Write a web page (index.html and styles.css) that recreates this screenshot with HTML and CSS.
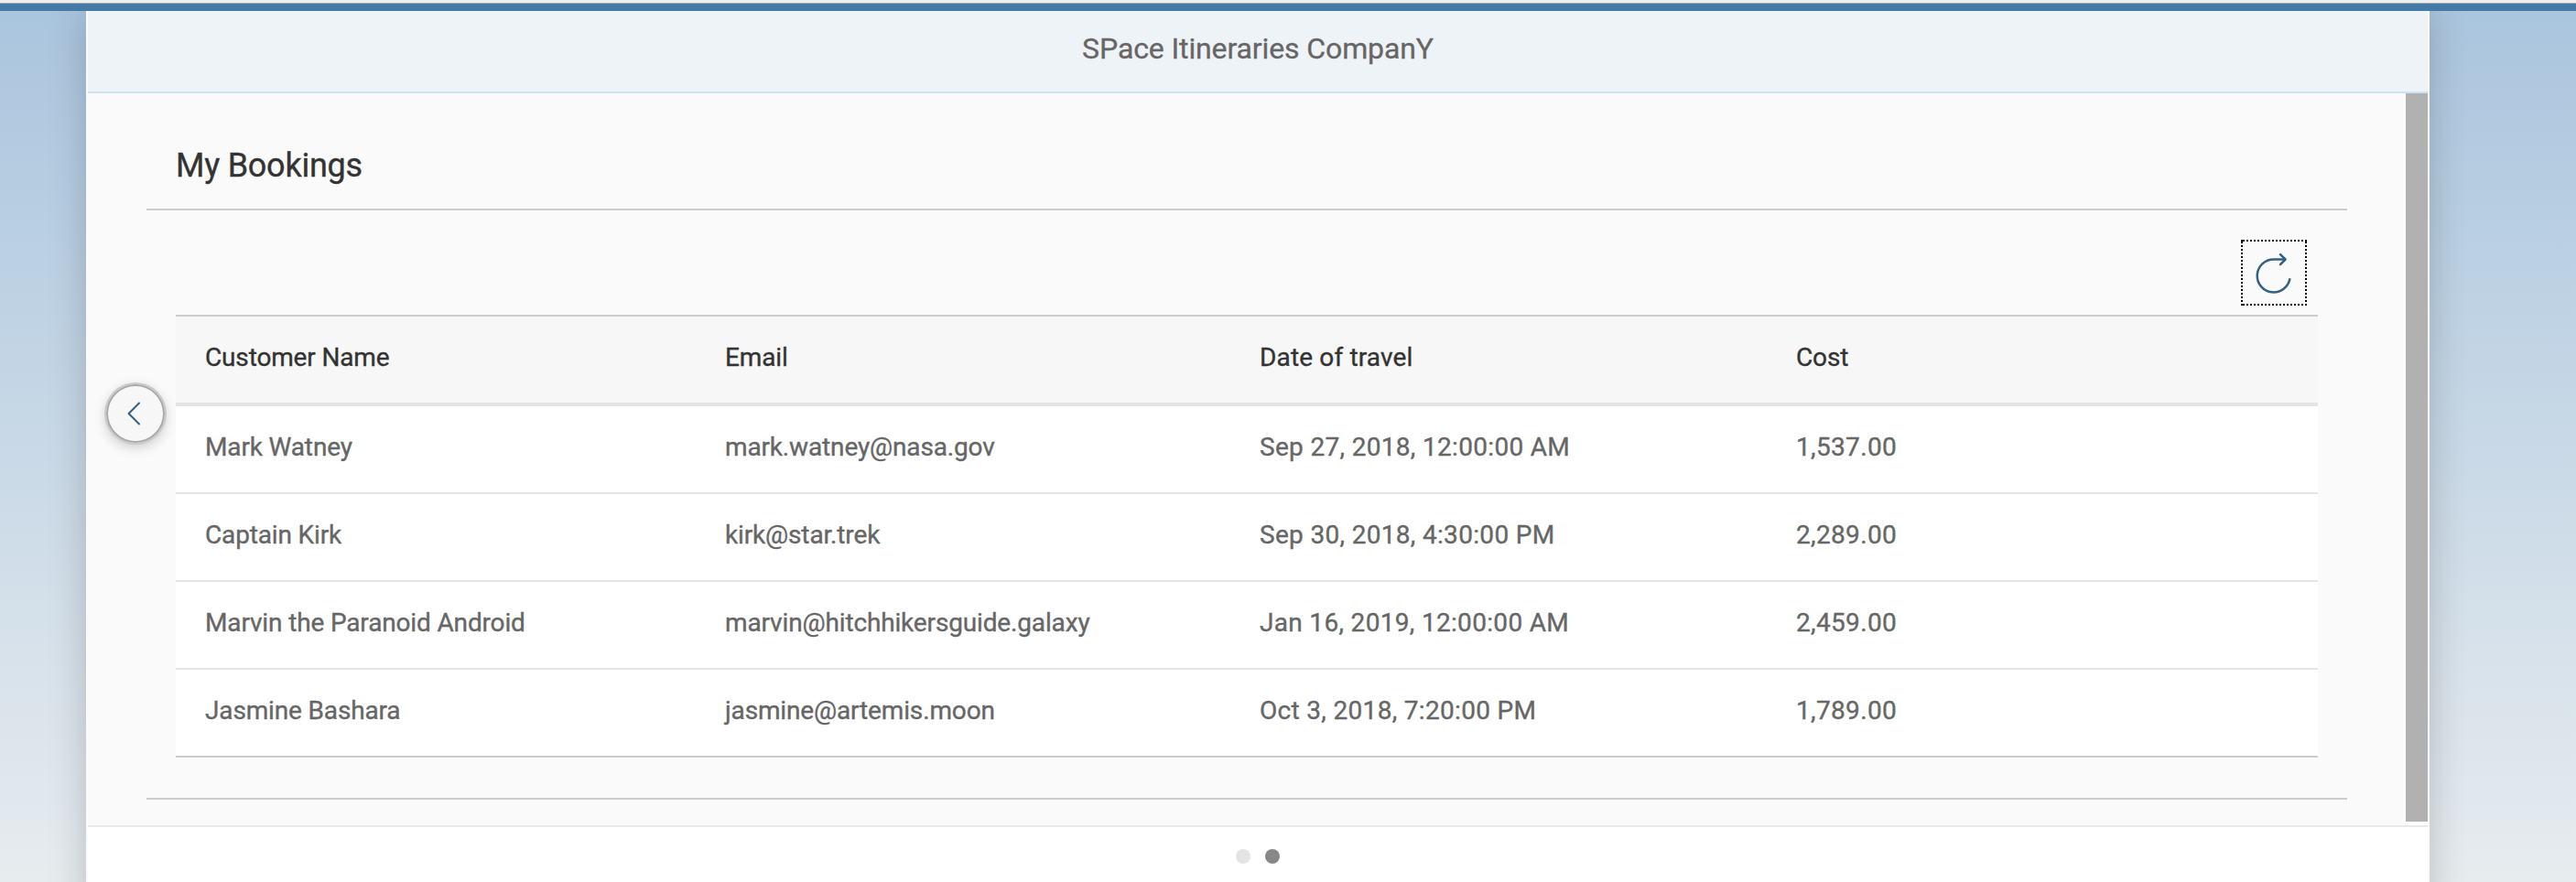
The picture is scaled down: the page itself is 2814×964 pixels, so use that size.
FILE: index.html
```
<!DOCTYPE html>
<html lang="en">
<head>
<meta charset="utf-8">
<title>SPace Itineraries CompanY</title>
<link rel="stylesheet" href="styles.css">
</head>
<body>
<div class="browser-edge"></div>
<div class="brand-bar"></div>
<div class="stage">
  <main class="panel">
    <header class="panel-header"><h1>SPace Itineraries CompanY</h1></header>
    <div class="panel-body">
      <section class="content">
        <h2 class="section-title">My Bookings</h2>
        <div class="section-body">
          <div class="toolbar">
            <button class="refresh" aria-label="Refresh">
              <svg width="72" height="72" viewBox="0 0 72 72" fill="none">
                <g stroke="#000" stroke-width="2" stroke-dasharray="2 2" shape-rendering="crispEdges">
                  <path d="M2 1H72M2 71H72M1 2V72M71 2V72"/>
                </g>
                <path fill="#000" d="M0 0h2v2H0zM70 0h2v2h-2zM0 70h2v2H0z"/>
                <g stroke="#346187" stroke-width="2.5" stroke-linecap="round" stroke-linejoin="round">
                  <path d="M48 21.4H35.7A18 18 0 1 0 53.5 42.3" stroke-linecap="butt"/>
                  <path d="M43 16.1L48.6 21.5L43 27.2"/>
                </g>
              </svg>
            </button>
          </div>
          <table class="bookings">
            <thead><tr><th>Customer Name</th><th>Email</th><th>Date of travel</th><th>Cost</th></tr></thead>
            <tbody>
              <tr><td>Mark Watney</td><td>mark.watney@nasa.gov</td><td>Sep 27, 2018, 12:00:00 AM</td><td>1,537.00</td></tr>
              <tr><td>Captain Kirk</td><td>kirk@star.trek</td><td>Sep 30, 2018, 4:30:00 PM</td><td>2,289.00</td></tr>
              <tr><td>Marvin the Paranoid Android</td><td>marvin@hitchhikersguide.galaxy</td><td>Jan 16, 2019, 12:00:00 AM</td><td>2,459.00</td></tr>
              <tr><td>Jasmine Bashara</td><td>jasmine@artemis.moon</td><td>Oct 3, 2018, 7:20:00 PM</td><td>1,789.00</td></tr>
            </tbody>
          </table>
        </div>
      </section>
      <div class="scrollbar"></div>
      <button class="previous" aria-label="Previous page">
        <svg width="64" height="64" viewBox="0 0 64 64" fill="none"><path d="M36 20.5L24.6 32L36 43.5" stroke="#346187" stroke-width="2" stroke-linecap="round" stroke-linejoin="round"/></svg>
      </button>
    </div>
    <footer class="pager"><span class="dot"></span><span class="dot active"></span></footer>
  </main>
</div>
</body>
</html>
```
FILE: styles.css
```
* { box-sizing: border-box; }
body {
  margin: 0;
  height: 964px;
  overflow: hidden;
  display: flex;
  flex-direction: column;
  font-family: Roboto, "Liberation Sans", sans-serif;
  font-size: 28px;
  color: #666;
  -webkit-text-stroke: .35px;
}
button { border: 0; padding: 0; margin: 0; }
svg { display: block; }
.browser-edge { height: 4px; background: #efefef; border-bottom: 1px solid #a9a9a9; }
.brand-bar { height: 8px; background: #447aa8; }
.stage {
  height: 952px;
  display: flex;
  overflow: hidden;
  padding: 0 160px 0 94px;
  background: linear-gradient(#aac5de, #e7ecef);
}
.panel {
  flex: 1;
  height: 1100px;
  display: flex;
  flex-direction: column;
  background: #fafafa;
  border: solid #fafafa;
  border-width: 0 2px;
  box-shadow: 0 0 40px rgba(0, 0, 0, .2);
}
.panel-header {
  height: 90px;
  display: flex;
  justify-content: center;
  padding-top: 21px;
  background: #eef3f8;
  border-bottom: 2px solid #d0e1ef;
}
h1, h2 { margin: 0; font-weight: 400; line-height: 40px; }
h1 { font-size: 32px; letter-spacing: -.12px; color: #666; text-shadow: 0 0 2px #fff; }
.panel-body {
  position: relative;
  height: 802px;
  display: flex;
  border-bottom: 2px solid #e9e9e9;
}
.content { flex: 1; padding: 0 64px; }
.section-title {
  height: 128px;
  padding: 59px 32px 0;
  font-size: 36px;
  letter-spacing: -.25px;
  color: #333;
  border-bottom: 2px solid #ccc;
}
.section-body { height: 644px; padding: 0 32px; border-bottom: 2px solid #ccc; }
.toolbar { height: 114px; display: flex; justify-content: flex-end; padding: 32px 12px 0 0; }
.refresh { width: 72px; height: 72px; background: none; }
.bookings {
  width: 100%;
  table-layout: fixed;
  border-collapse: separate;
  border-spacing: 0;
  border-bottom: 2px solid #ccc;
}
.bookings th, .bookings td {
  height: 96px;
  padding: 0 0 5px 32px;
  font-weight: 400;
  letter-spacing: -.15px;
  text-align: left;
  white-space: nowrap;
  background: #fff;
  border-bottom: 2px solid #e4e4e4;
}
.bookings th {
  height: 100px;
  color: #333;
  background: #f7f7f7;
  border-top: 2px solid #ccc;
  border-bottom: 4px solid #e4e4e4;
}
.bookings th:nth-child(1) { width: 568px; }
.bookings th:nth-child(2) { width: 584px; }
.bookings th:nth-child(3) { width: 586px; letter-spacing: .15px; }
.bookings td:nth-child(3) { letter-spacing: .32px; }
.bookings td:nth-child(4) { letter-spacing: .35px; }
.bookings tbody tr:last-child td { height: 94px; border-bottom: 0; }
.scrollbar { width: 24px; height: 796px; background: #b1b1b1; box-shadow: 0 4px #fff; }
.previous {
  position: absolute;
  left: 20px;
  top: 318px;
  width: 64px;
  height: 64px;
  border-radius: 50%;
  background: #f7f7f7;
  box-shadow: inset 0 0 0 2px #a9a9a9, 0 0 0 2px #cacaca, 0 4px 14px rgba(0, 0, 0, .22);
}
.pager { flex: 1; display: flex; justify-content: center; gap: 16px; padding-top: 24px; background: #fff; }
.dot { width: 16px; height: 16px; border-radius: 50%; background: #e4e4e4; }
.dot.active { background: #888; }
```
